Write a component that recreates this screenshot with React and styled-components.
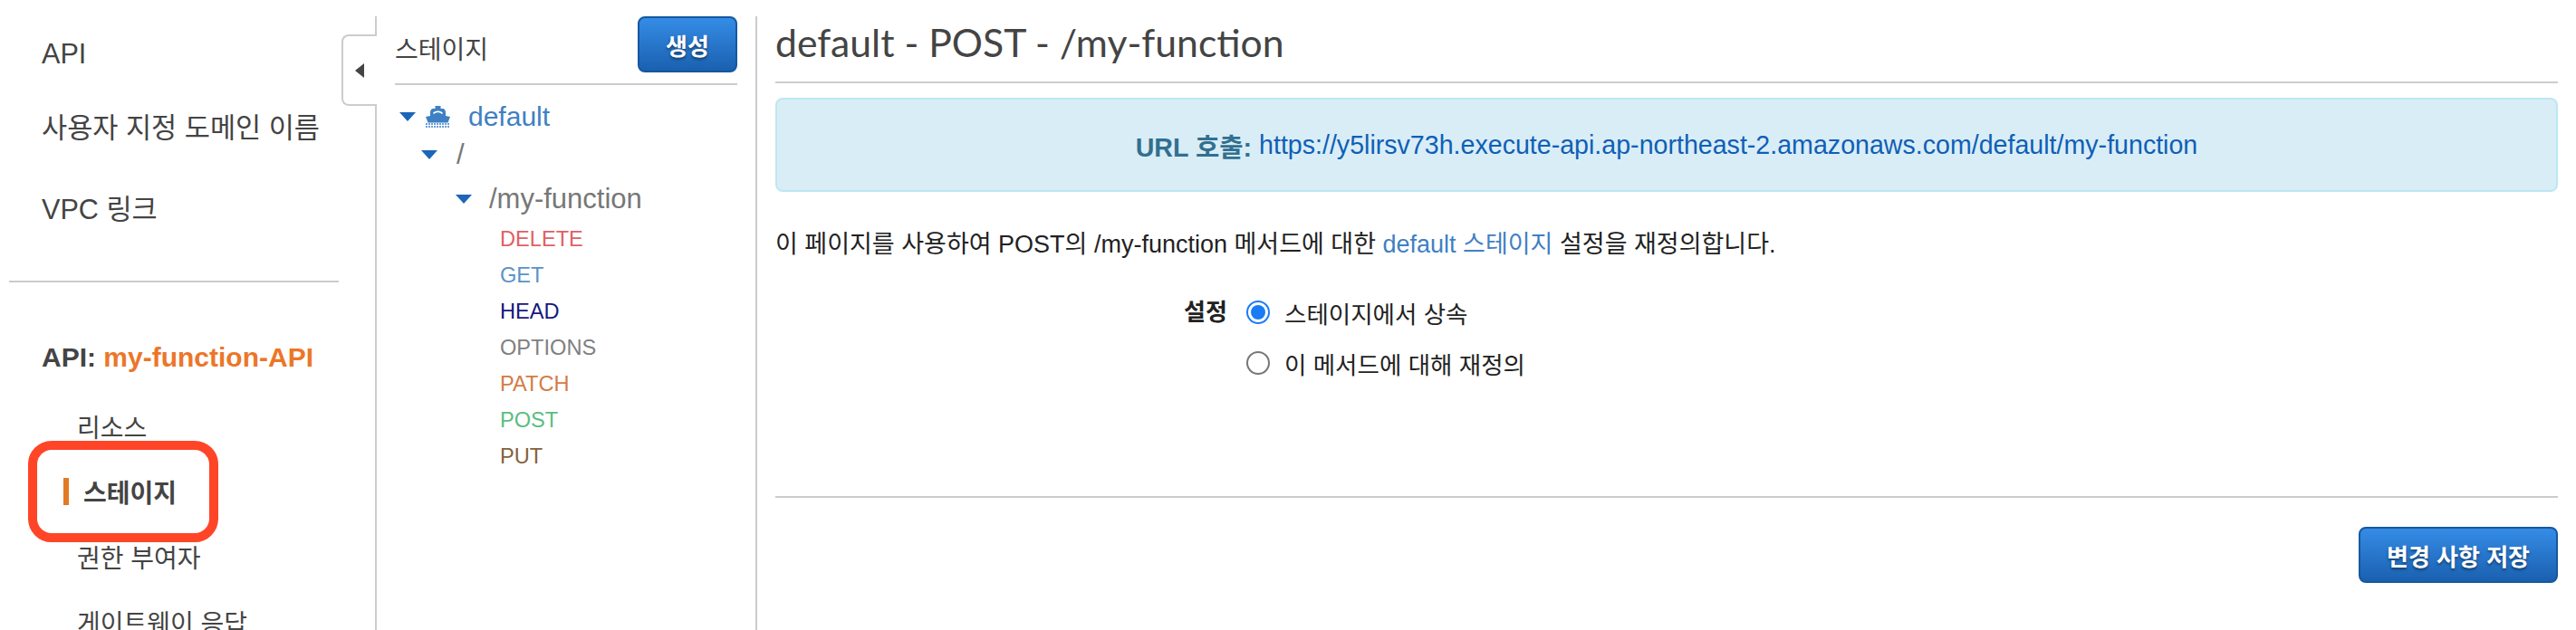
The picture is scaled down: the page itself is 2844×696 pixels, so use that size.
import React from "react";
import styled, { createGlobalStyle } from "styled-components";

const Global = createGlobalStyle`
  html, body { margin: 0; padding: 0; background: #fff; }
  body { font-family: "Liberation Sans", "Noto Sans CJK KR", sans-serif; }
`;

const Page = styled.div`
  display: flex;
  width: 2844px;
  height: 696px;
  overflow: hidden;
  background: #fff;
`;

const Sidebar = styled.nav`
  width: 414px;
  flex: none;
  padding: 41px 40px 0 10px;
  box-sizing: border-box;
  color: #444;
`;

const NavItem = styled.div`
  padding-left: 36px;
  margin-top: ${(p) => p.$top || 0}px;
  font-size: 30.6px;
  line-height: 36px;
  white-space: nowrap;
`;

const SideRule = styled.hr`
  margin: 61px 0 0;
  width: 364px;
  border: 0;
  border-top: 2px solid #ccc;
`;

const SectionTitle = styled.div`
  margin: 65px 0 40px 36px;
  font-size: 30px;
  line-height: 36px;
  font-weight: 700;
  white-space: nowrap;

  span { color: #ec7628; }
`;

const SubList = styled.div`
  display: flex;
  flex-direction: column;
  gap: 36px;
`;

const SubItem = styled.div`
  position: relative;
  display: flex;
  align-items: center;
  height: 36px;
  margin-left: ${(p) => (p.$active ? 60 : 75)}px;
  font-size: 28px;
  font-weight: ${(p) => (p.$active ? 700 : 400)};
  white-space: nowrap;
`;

const ActiveBar = styled.i`
  width: 6px;
  height: 30px;
  margin-right: 16px;
  background: #e27a24;
`;

const Highlight = styled.div`
  position: absolute;
  left: -39px;
  top: -38px;
  width: 210px;
  height: 112px;
  box-sizing: border-box;
  border: 10px solid #ff4528;
  border-radius: 26px;
`;

const StagePanel = styled.section`
  position: relative;
  width: 422px;
  flex: none;
  margin-top: 18px;
  padding: 0 20px;
  box-sizing: border-box;
  border-left: 2px solid #ccc;
  border-right: 2px solid #ccc;
`;

const Toggle = styled.div`
  position: absolute;
  left: -39px;
  top: 20px;
  width: 39px;
  height: 79px;
  box-sizing: border-box;
  display: flex;
  align-items: center;
  padding-left: 13px;
  background: #fff;
  border: 2px solid #ccc;
  border-right: 0;
  border-radius: 8px 0 0 8px;

  &::before {
    content: "";
    border-style: solid;
    border-width: 8px 10px 8px 0;
    border-color: transparent #444 transparent transparent;
  }
`;

const PanelHead = styled.div`
  display: flex;
  align-items: center;
  justify-content: space-between;
  padding-bottom: 12px;
  border-bottom: 2px solid #ccc;
  font-size: 28px;
  color: #444;

  span { padding-top: 8px; }
`;

const Button = styled.button`
  height: 62px;
  width: ${(p) => p.$width}px;
  padding: 0;
  box-sizing: border-box;
  border: 2px solid #15589f;
  border-radius: 8px;
  background: linear-gradient(#358ce6, #1a60b0);
  color: #fff;
  font-family: inherit;
  font-size: 26px;
  font-weight: 700;
  text-shadow: 0 2px 3px rgba(0, 0, 0, 0.45);
`;

const TreeRow = styled.div`
  display: flex;
  align-items: center;
  height: 36px;
  margin-top: ${(p) => p.$top}px;
  padding-left: ${(p) => p.$indent}px;
  font-size: ${(p) => p.$size}px;
  color: ${(p) => p.$color};
  white-space: nowrap;
`;

const Caret = styled.i`
  width: 0;
  height: 0;
  margin-right: ${(p) => p.$gap}px;
  border-style: solid;
  border-width: 10px 9px 0 9px;
  border-color: #1b66b8 transparent transparent transparent;
`;

const ShipIcon = styled.svg`
  width: 27px;
  height: 24px;
  margin-right: 20px;
  fill: #3f80c3;
`;

const Waves = styled.path`
  fill: none;
  stroke: #3f80c3;
  stroke-width: 1.6;
  stroke-dasharray: 2 1;
`;

const Methods = styled.div`
  margin: 6px 0 0 116px;
`;

const Method = styled.div`
  font-size: 23.6px;
  line-height: 40px;
  color: ${(p) => p.$color};
`;

const Main = styled.main`
  flex: 1;
  min-width: 0;
  padding: 0 20px;
`;

const Title = styled.h1`
  height: 92px;
  margin: 0;
  padding-top: 24px;
  box-sizing: border-box;
  border-bottom: 2px solid #ccc;
  font-family: Lato, "Liberation Sans", sans-serif;
  font-size: 42.7px;
  line-height: 46px;
  font-weight: 400;
  color: #444;
`;

const InfoBox = styled.div`
  height: 104px;
  margin-top: 16px;
  box-sizing: border-box;
  display: flex;
  align-items: center;
  justify-content: center;
  background: #d9edf7;
  border: 2px solid #bce8f1;
  border-radius: 8px;
  font-size: 28.6px;
  color: #0f5fb5;

  b { color: #31708f; margin-right: 8px; }
`;

const Lead = styled.p`
  margin: 40px 0 0;
  font-size: 27px;
  line-height: 36px;
  color: #222;

  a { color: #3f80c3; }
`;

const Settings = styled.div`
  display: grid;
  grid-template-columns: 47px auto;
  column-gap: 22px;
  justify-content: start;
  margin: 39px 0 0 451px;
  font-size: 26.5px;
  color: #222;
`;

const SettingsLabel = styled.div`
  font-size: 26px;
  font-weight: 700;
  line-height: 36px;
  white-space: nowrap;
`;

const Options = styled.div`
  display: flex;
  flex-direction: column;
  gap: 20px;
`;

const Option = styled.label`
  display: flex;
  align-items: center;
  height: 36px;
  gap: 16px;
`;

const Radio = styled.i`
  width: 26px;
  height: 26px;
  box-sizing: border-box;
  border-radius: 50%;
  border: 2px solid ${(p) => (p.$on ? "#1a7cf5" : "#777")};
  padding: 3px;
  background: ${(p) => (p.$on ? "#1a7cf5" : "#fff")};
  background-clip: content-box;
`;

const Footer = styled.div`
  display: flex;
  justify-content: flex-end;
  margin-top: 129px;
  padding-top: 32px;
  border-top: 2px solid #ccc;
`;

const methods = [
  ["DELETE", "#df5f66"],
  ["GET", "#5b92c7"],
  ["HEAD", "#15187f"],
  ["OPTIONS", "#808080"],
  ["PATCH", "#d27c45"],
  ["POST", "#5bbd80"],
  ["PUT", "#86603a"],
];

export default function App() {
  return (
    <Page>
      <Global />
      <Sidebar>
        <NavItem>API</NavItem>
        <NavItem $top={46}>사용자 지정 도메인 이름</NavItem>
        <NavItem $top={54}>VPC 링크</NavItem>
        <SideRule />
        <SectionTitle>
          API: <span>my-function-API</span>
        </SectionTitle>
        <SubList>
          <SubItem>리소스</SubItem>
          <SubItem $active>
            <ActiveBar />
            스테이지
            <Highlight />
          </SubItem>
          <SubItem>권한 부여자</SubItem>
          <SubItem>게이트웨이 응답</SubItem>
        </SubList>
      </Sidebar>

      <StagePanel>
        <Toggle />
        <PanelHead>
          <span>스테이지</span>
          <Button $width={110}>생성</Button>
        </PanelHead>
        <TreeRow $top={17} $indent={5} $size={30} $color="#3f80c3">
          <Caret $gap={11} />
          <ShipIcon viewBox="0 0 27 24">
            <path d="M10.500 0h6v3h2.500c1.500 0 3 2 3 4v4l5 1-2.500 6.500H2.500L0 12l5-1V7c0-2 1.500-4 3-4h2.500z" />
            <path d="M8 8c1.500-3.500 9.500-3.500 11 0l-1.200 1c-1.800-2.400-6.800-2.400-8.600 0z" fill="#fff" />
            <Waves d="M0 20h27M0 23h27" />
          </ShipIcon>
          default
        </TreeRow>
        <TreeRow $top={6} $indent={29} $size={31} $color="#777">
          <Caret $gap={21} />/
        </TreeRow>
        <TreeRow $top={13} $indent={67} $size={31} $color="#777">
          <Caret $gap={19} />
          /my-function
        </TreeRow>
        <Methods>
          {methods.map(([name, color]) => (
            <Method key={name} $color={color}>
              {name}
            </Method>
          ))}
        </Methods>
      </StagePanel>

      <Main>
        <Title>default - POST - /my-function</Title>
        <InfoBox>
          <b>URL 호출:</b>
          https://y5lirsv73h.execute-api.ap-northeast-2.amazonaws.com/default/my-function
        </InfoBox>
        <Lead>
          이 페이지를 사용하여 POST의 /my-function 메서드에 대한 <a>default 스테이지</a> 설정을 재정의합니다.
        </Lead>
        <Settings>
          <SettingsLabel>설정</SettingsLabel>
          <Options>
            <Option>
              <Radio $on />
              스테이지에서 상속
            </Option>
            <Option>
              <Radio />이 메서드에 대해 재정의
            </Option>
          </Options>
        </Settings>
        <Footer>
          <Button $width={220}>변경 사항 저장</Button>
        </Footer>
      </Main>
    </Page>
  );
}
